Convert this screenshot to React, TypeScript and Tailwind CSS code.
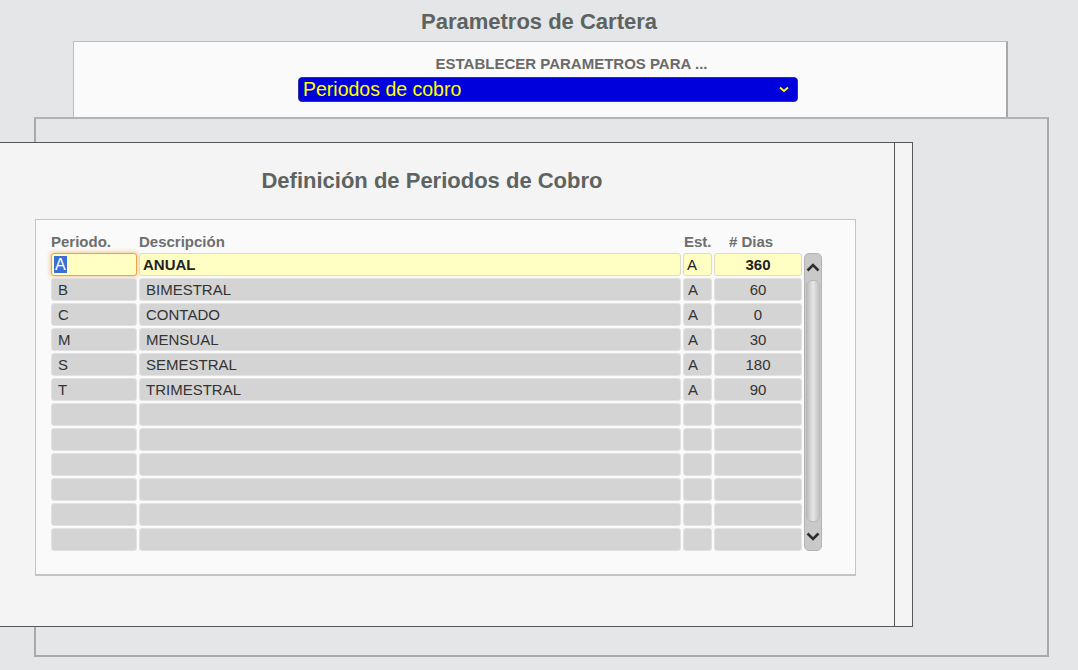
import React from 'react';

type Periodo = { code: string; desc: string; est: string; dias: string };

const periodos: Periodo[] = [
  { code: 'A', desc: 'ANUAL', est: 'A', dias: '360' },
  { code: 'B', desc: 'BIMESTRAL', est: 'A', dias: '60' },
  { code: 'C', desc: 'CONTADO', est: 'A', dias: '0' },
  { code: 'M', desc: 'MENSUAL', est: 'A', dias: '30' },
  { code: 'S', desc: 'SEMESTRAL', est: 'A', dias: '180' },
  { code: 'T', desc: 'TRIMESTRAL', est: 'A', dias: '90' },
];

const TOTAL_ROWS = 12;

const cell = 'h-[23px] rounded-[3px] bg-[#d4d4d5] border border-[#e2e2e2] flex items-center text-[15px] text-[#333] leading-none';
const cellActive = 'h-[23px] rounded-[3px] bg-[#ffffc4] border border-[#dcdcc0] flex items-center text-[15px] text-[#222] font-bold leading-none';

const Chevron = ({ up }: { up?: boolean }) => (
  <svg width="14" height="9" viewBox="0 0 14 9" className="block">
    <path
      d={up ? 'M1.5 7.5 L7 2 L12.5 7.5' : 'M1.5 1.5 L7 7 L12.5 1.5'}
      fill="none"
      stroke="#2e2e2e"
      strokeWidth="2.6"
    />
  </svg>
);

const Scrollbar = () => (
  <div className="w-[18px] h-[298px] rounded-[5px] bg-[#c9c9c9] border border-[#b4b4b4] flex flex-col items-center">
    <div className="h-[26px] flex items-center justify-center">
      <Chevron up />
    </div>
    <div className="w-[14px] flex-1 rounded-[6px] bg-gradient-to-r from-[#bdbdbd] via-[#e6e6e6] to-[#c4c4c4] border border-[#b9b9b9]" />
    <div className="h-[28px] flex items-center justify-center">
      <Chevron />
    </div>
  </div>
);

const PeriodosTable = () => {
  const emptyRows = Array.from({ length: TOTAL_ROWS - periodos.length });

  return (
    <div className="ml-[35px] w-[821px] h-[357px] bg-[#fafafa] border border-[#c4c4c4] border-b-2 pl-[15px] pt-[12px]">
      <div className="grid grid-cols-[86px_542px_29px_88px] gap-x-[2px] h-[21px] items-end text-[15px] font-bold text-[#6c6f6e] leading-none pb-[4px]">
        <span>Periodo.</span>
        <span>Descripción</span>
        <span className="pl-[1px]">Est.</span>
        <span className="pl-[15px]">#&nbsp;Dias</span>
      </div>
      <div className="flex gap-[2px]">
        <div className="grid grid-cols-[86px_542px_29px_88px] gap-x-[2px] gap-y-[2px] auto-rows-[23px]">
          {periodos.map((p, i) =>
            i === 0 ? (
              <React.Fragment key={p.code}>
                <div className="h-[23px] rounded-[3px] bg-[#ffffc4] border border-[#f0a24a] shadow-[0_0_4px_1px_rgba(245,160,70,0.55)] flex items-center pl-[2px]">
                  <span className="bg-[#3b6fd6] text-white text-[16px] leading-[17px] px-[1px]">{p.code}</span>
                </div>
                <div className={`${cellActive} pl-[3px]`}>{p.desc}</div>
                <div className={`${cellActive} font-normal pl-[3px]`}>{p.est}</div>
                <div className={`${cellActive} justify-center`}>{p.dias}</div>
              </React.Fragment>
            ) : (
              <React.Fragment key={p.code}>
                <div className={`${cell} pl-[6px]`}>{p.code}</div>
                <div className={`${cell} pl-[6px]`}>{p.desc}</div>
                <div className={`${cell} pl-[4px]`}>{p.est}</div>
                <div className={`${cell} justify-center`}>{p.dias}</div>
              </React.Fragment>
            )
          )}
          {emptyRows.map((_, i) => (
            <React.Fragment key={`empty-${i}`}>
              <div className={cell}></div>
              <div className={cell}></div>
              <div className={cell}></div>
              <div className={cell}></div>
            </React.Fragment>
          ))}
        </div>
        <Scrollbar />
      </div>
    </div>
  );
};

export default function App() {
  return (
    <div className="relative w-[1078px] h-[670px] overflow-hidden bg-[#e5e6e8] font-['Liberation_Sans',Arial,sans-serif]">
      <h1 className="h-[41px] pt-[9px] text-center text-[22px] leading-[26px] font-bold text-[#5c6361]">
        Parametros de Cartera
      </h1>

      <div className="ml-[73px] w-[935px] h-[77px] bg-[#fafafa] border border-[#bcbcbc] border-r-2 border-r-[#a8a8a8] flex flex-col items-center">
        <div className="pt-[13px] pl-[63px] text-[15px] leading-[17px] font-bold text-[#6a6a6a]">
          ESTABLECER PARAMETROS PARA ...
        </div>
        <div className="mt-[5px] ml-[16px] w-[500px] h-[25px] rounded-[4px] bg-[#0000dc] border border-[#3030a0] flex items-center justify-between pl-[4px] pr-[8px]">
          <span className="text-[19.5px] leading-none text-[#ffff00]">Periodos de cobro</span>
          <svg width="10" height="7" viewBox="0 0 10 7">
            <path d="M1 1.5 L5 5 L9 1.5" fill="none" stroke="#ffff00" strokeWidth="2" />
          </svg>
        </div>
      </div>

      <div className="ml-[34px] w-[1015px] h-[540px] mt-[-1px] border-2 border-[#aaaaaa] border-t-[#b4b4b4] bg-[#e5e6e8]" />

      <div className="absolute left-0 top-[142px] w-[913px] h-[485px] bg-[#f4f4f4] border-y border-r border-[#555a58] flex">
        <div className="w-[895px] h-full border-r border-[#555a58] flex flex-col">
          <h2 className="pt-[25px] pr-[30px] h-[76px] text-center text-[22px] leading-[26px] font-bold text-[#5c6361]">
            Definición de Periodos de Cobro
          </h2>
          <PeriodosTable />
        </div>
      </div>
    </div>
  );
}
